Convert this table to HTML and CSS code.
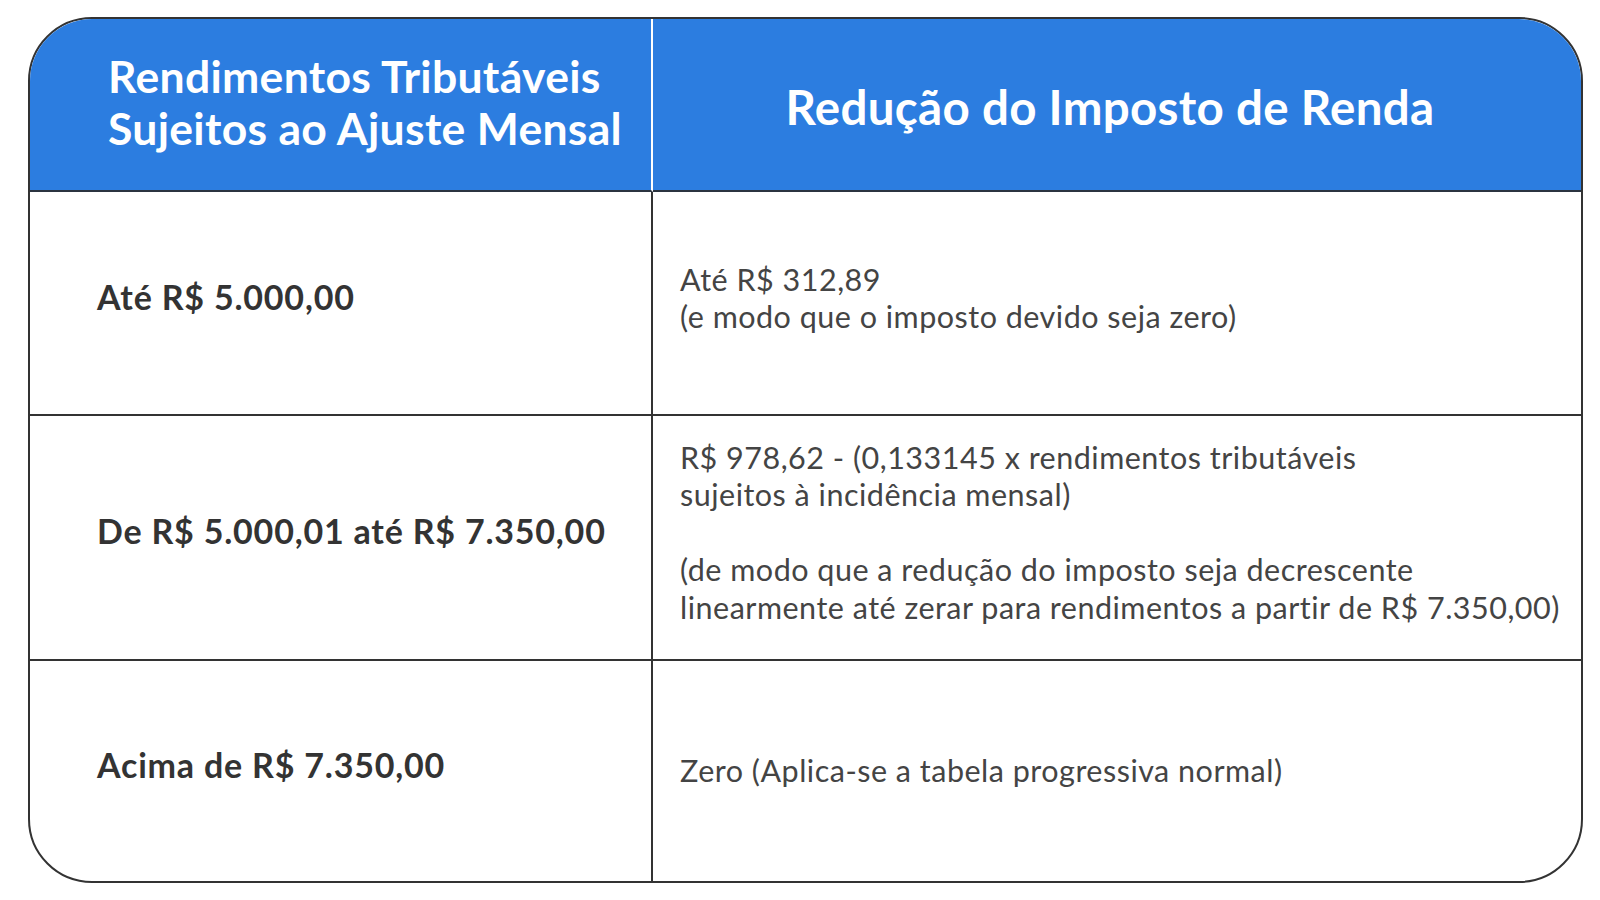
FILE: index.html
```html
<!DOCTYPE html>
<html lang="pt-BR">
<head>
<meta charset="utf-8">
<title>Redução do Imposto de Renda</title>
<link rel="stylesheet" href="styles.css">
</head>
<body>
<div class="table">
  <div class="cell head head-left">
    <div class="head-title">Rendimentos Tributáveis<br>Sujeitos ao Ajuste Mensal</div>
  </div>
  <div class="cell head head-right">
    <div class="head-title big">Redução do Imposto de Renda</div>
  </div>

  <div class="cell left"><span class="range">Até R$ 5.000,00</span></div>
  <div class="cell right"><p class="desc">Até R$ 312,89<br>(e modo que o imposto devido seja zero)</p></div>

  <div class="cell left"><span class="range">De R$ 5.000,01 até R$ 7.350,00</span></div>
  <div class="cell right"><p class="desc">R$ 978,62 - (0,133145 x rendimentos tributáveis<br>sujeitos à incidência mensal)<br><br>(de modo que a redução do imposto seja decrescente<br>linearmente até zerar para rendimentos a partir de R$ 7.350,00)</p></div>

  <div class="cell left last"><span class="range">Acima de R$ 7.350,00</span></div>
  <div class="cell right last"><p class="desc">Zero (Aplica-se a tabela progressiva normal)</p></div>
</div>
</body>
</html>
```

FILE: styles.css
```css
html, body {
  margin: 0;
  padding: 0;
  background: #ffffff;
}

body {
  font-family: Lato, "Open Sans", "Noto Sans", sans-serif;
  width: 1600px;
  height: 900px;
  overflow: hidden;
}

.table {
  margin: 17px 0 0 28px;
  width: 1555px;
  height: 866px;
  box-sizing: border-box;
  border: 2px solid #333333;
  border-radius: 64px;
  overflow: hidden;
  display: grid;
  grid-template-columns: 623px 1fr;
  grid-template-rows: 173px 224px 245px 1fr;
}

.cell {
  box-sizing: border-box;
  display: flex;
  align-items: center;
  border-bottom: 2px solid #333333;
}

.cell.last {
  border-bottom: none;
}

.head {
  background: #2c7de0;
  color: #ffffff;
  border-bottom: 2px solid #2b3440;
}

.head-left {
  border-right: 2px solid #ffffff;
  padding-left: 78px;
  padding-bottom: 6px;
}

.head-right {
  justify-content: center;
  padding-right: 14px;
  padding-top: 4px;
}

.head-title {
  font-weight: 700;
  font-size: 44.5px;
  line-height: 52px;
  letter-spacing: 0.3px;
}

.head-title.big {
  font-size: 47.5px;
}

.left {
  border-right: 2px solid #333333;
  padding-left: 67px;
  padding-bottom: 14px;
}

.range {
  font-weight: 700;
  font-size: 34px;
  letter-spacing: 0.8px;
  color: #333333;
}

.right {
  padding-left: 27px;
  padding-bottom: 10px;
}

.right.last {
  padding-bottom: 0;
}

.desc {
  margin: 0;
  font-size: 30.5px;
  line-height: 37.5px;
  letter-spacing: 0.5px;
  color: #444444;
}
```
